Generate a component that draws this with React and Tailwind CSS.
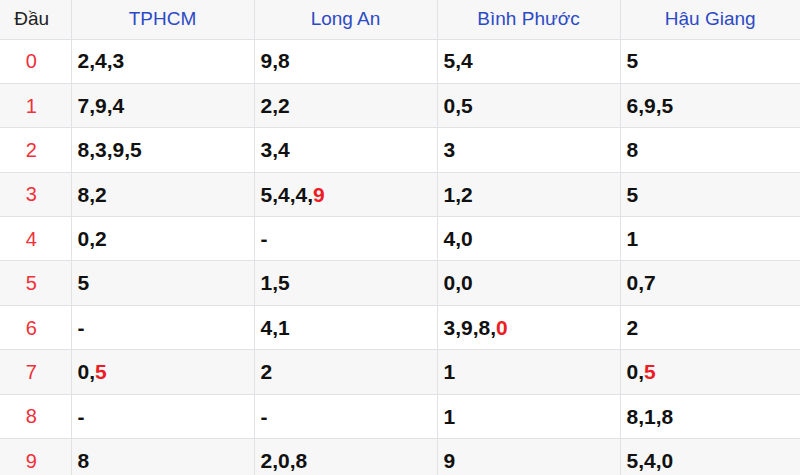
import React from "react";

const provinces = ["TPHCM", "Long An", "Bình Phước", "Hậu Giang"];

// each cell: [normal part, red tail]
const rows = [
  [["2,4,3"], ["9,8"], ["5,4"], ["5"]],
  [["7,9,4"], ["2,2"], ["0,5"], ["6,9,5"]],
  [["8,3,9,5"], ["3,4"], ["3"], ["8"]],
  [["8,2"], ["5,4,4,", "9"], ["1,2"], ["5"]],
  [["0,2"], ["-"], ["4,0"], ["1"]],
  [["5"], ["1,5"], ["0,0"], ["0,7"]],
  [["-"], ["4,1"], ["3,9,8,", "0"], ["2"]],
  [["0,", "5"], ["2"], ["1"], ["0,", "5"]],
  [["-"], ["-"], ["1"], ["8,1,8"]],
  [["8"], ["2,0,8"], ["9"], ["5,4,0"]],
];

const App = () => {
  return (
    <div className="w-[800px] h-[475px] overflow-hidden bg-white font-['Liberation_Sans',Arial,sans-serif]">
      <table className="w-[800px] table-fixed border-collapse">
        <colgroup>
          <col className="w-[71px]" />
          <col className="w-[183px]" />
          <col className="w-[183px]" />
          <col className="w-[183px]" />
          <col className="w-[180px]" />
        </colgroup>
        <thead>
          <tr className="h-[39px] bg-[#f7f7f7]">
            <th className="border-r border-b border-[#e1e1e6] pr-[7px] text-[19px] font-normal text-[#222]">
              Đầu
            </th>
            {provinces.map((p, i) => (
              <th
                key={p}
                className={
                  "border-b border-[#e1e1e6] text-[19px] font-normal text-[#2d4ac6] " +
                  (i < 3 ? "border-r" : "")
                }
              >
                {p}
              </th>
            ))}
          </tr>
        </thead>
        <tbody>
          {rows.map((r, idx) => (
            <tr key={idx} className={"h-[44.4px] " + (idx % 2 ? "bg-[#f7f7f7]" : "bg-white")}>
              <td className="border-r border-b border-[#e1e1e6] pr-[8px] text-center text-[20px] text-[#f0303a]">
                {idx}
              </td>
              {r.map((cell, i) => (
                <td
                  key={i}
                  className={
                    "border-b border-[#e1e1e6] pl-[6px] text-[21px] font-bold text-[#111] " +
                    (i < 3 ? "border-r" : "")
                  }
                >
                  {cell[0]}
                  {cell[1] && <span className="text-[#ee1c25]">{cell[1]}</span>}
                </td>
              ))}
            </tr>
          ))}
        </tbody>
      </table>
    </div>
  );
};

export default App;
